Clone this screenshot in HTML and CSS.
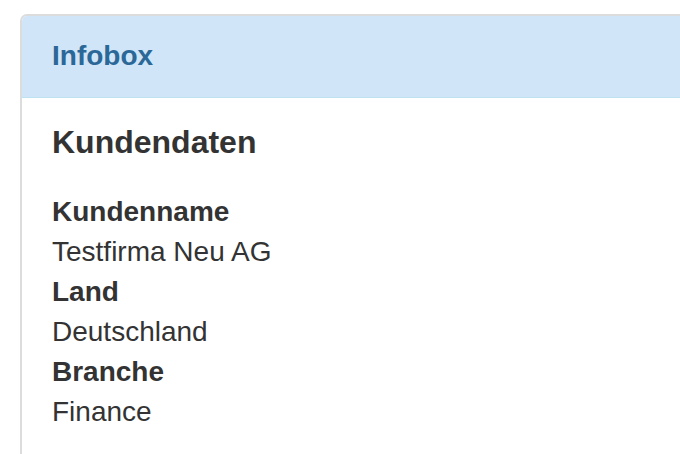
FILE: index.html
```html
<!DOCTYPE html>
<html lang="de">
<head>
    <meta charset="UTF-8">
    <meta name="viewport" content="width=device-width, initial-scale=1.0">
    <title>Infobox</title>
    <link rel="stylesheet" href="styles.css">
</head>
<body>
<!-- Infobox panel ---------------------------------------------------------------->
 <div class="page">
  <div class="panel">
    <div class="panel-heading">Infobox</div>
    <div class="panel-body">
        <h3>Kundendaten</h3>
        <dl class="details">
            <dt>Kundenname</dt>
            <dd>Testfirma Neu AG</dd>
            <dt>Land</dt>
            <dd>Deutschland</dd>
            <dt>Branche</dt>
            <dd>Finance</dd>
        </dl>
    </div>
  </div>
 </div>
</body>
</html>
```
FILE: styles.css
```css
body {
  font-family: "Liberation Sans", Arial, sans-serif;
  margin: 0;
  background-color: #fff;
  color: #333;
}
.page {
  height: 454px;
  padding: 14px 0 0 20px;
  box-sizing: border-box;
  overflow: hidden;
}
.panel {
  margin-right: -30px;
  height: 480px;
  border: 2px solid #dcdcdc;
  border-radius: 7px;
  background-color: #fff;
}
.panel-heading {
  padding: 20px 30px 21px;
  font-size: 28px;
  font-weight: bold;
  line-height: 40px;
  color: #2b6898;
  background-color: #d0e6f8;
  border-bottom: 1px solid #bde3f0;
  border-radius: 5px 5px 0 0;
}
.panel-body {
  padding: 27px 30px;
}
.panel-body h3 {
  margin: 0 0 32px;
  font-size: 32px;
  line-height: 1.1;
}
.details {
  margin: 0;
  font-size: 28px;
  line-height: 40px;
}
.details dt {
  font-weight: bold;
}
.details dd {
  margin: 0;
}
```
